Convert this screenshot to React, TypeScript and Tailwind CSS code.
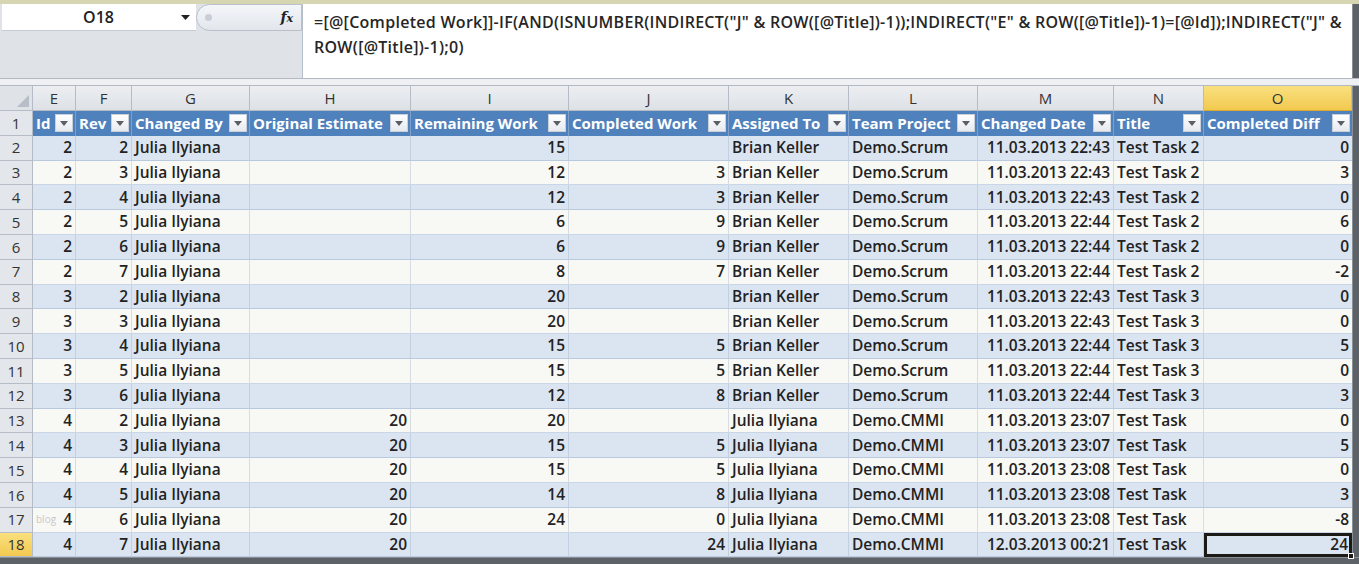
import React from "react";

type Row = {
  n: number;
  id: number;
  rev: number;
  est: string;
  rem: string;
  comp: string;
  who: string;
  proj: string;
  date: string;
  title: string;
  diff: string;
};

const rows: Row[] = [
  { n: 2, id: 2, rev: 2, est: "", rem: "15", comp: "", who: "Brian Keller", proj: "Demo.Scrum", date: "11.03.2013 22:43", title: "Test Task 2", diff: "0" },
  { n: 3, id: 2, rev: 3, est: "", rem: "12", comp: "3", who: "Brian Keller", proj: "Demo.Scrum", date: "11.03.2013 22:43", title: "Test Task 2", diff: "3" },
  { n: 4, id: 2, rev: 4, est: "", rem: "12", comp: "3", who: "Brian Keller", proj: "Demo.Scrum", date: "11.03.2013 22:43", title: "Test Task 2", diff: "0" },
  { n: 5, id: 2, rev: 5, est: "", rem: "6", comp: "9", who: "Brian Keller", proj: "Demo.Scrum", date: "11.03.2013 22:44", title: "Test Task 2", diff: "6" },
  { n: 6, id: 2, rev: 6, est: "", rem: "6", comp: "9", who: "Brian Keller", proj: "Demo.Scrum", date: "11.03.2013 22:44", title: "Test Task 2", diff: "0" },
  { n: 7, id: 2, rev: 7, est: "", rem: "8", comp: "7", who: "Brian Keller", proj: "Demo.Scrum", date: "11.03.2013 22:44", title: "Test Task 2", diff: "-2" },
  { n: 8, id: 3, rev: 2, est: "", rem: "20", comp: "", who: "Brian Keller", proj: "Demo.Scrum", date: "11.03.2013 22:43", title: "Test Task 3", diff: "0" },
  { n: 9, id: 3, rev: 3, est: "", rem: "20", comp: "", who: "Brian Keller", proj: "Demo.Scrum", date: "11.03.2013 22:43", title: "Test Task 3", diff: "0" },
  { n: 10, id: 3, rev: 4, est: "", rem: "15", comp: "5", who: "Brian Keller", proj: "Demo.Scrum", date: "11.03.2013 22:44", title: "Test Task 3", diff: "5" },
  { n: 11, id: 3, rev: 5, est: "", rem: "15", comp: "5", who: "Brian Keller", proj: "Demo.Scrum", date: "11.03.2013 22:44", title: "Test Task 3", diff: "0" },
  { n: 12, id: 3, rev: 6, est: "", rem: "12", comp: "8", who: "Brian Keller", proj: "Demo.Scrum", date: "11.03.2013 22:44", title: "Test Task 3", diff: "3" },
  { n: 13, id: 4, rev: 2, est: "20", rem: "20", comp: "", who: "Julia Ilyiana", proj: "Demo.CMMI", date: "11.03.2013 23:07", title: "Test Task", diff: "0" },
  { n: 14, id: 4, rev: 3, est: "20", rem: "15", comp: "5", who: "Julia Ilyiana", proj: "Demo.CMMI", date: "11.03.2013 23:07", title: "Test Task", diff: "5" },
  { n: 15, id: 4, rev: 4, est: "20", rem: "15", comp: "5", who: "Julia Ilyiana", proj: "Demo.CMMI", date: "11.03.2013 23:08", title: "Test Task", diff: "0" },
  { n: 16, id: 4, rev: 5, est: "20", rem: "14", comp: "8", who: "Julia Ilyiana", proj: "Demo.CMMI", date: "11.03.2013 23:08", title: "Test Task", diff: "3" },
  { n: 17, id: 4, rev: 6, est: "20", rem: "24", comp: "0", who: "Julia Ilyiana", proj: "Demo.CMMI", date: "11.03.2013 23:08", title: "Test Task", diff: "-8" },
  { n: 18, id: 4, rev: 7, est: "20", rem: "", comp: "24", who: "Julia Ilyiana", proj: "Demo.CMMI", date: "12.03.2013 00:21", title: "Test Task", diff: "24" },
];

const letters = ["E", "F", "G", "H", "I", "J", "K", "L", "M", "N", "O"];
const headers = ["Id", "Rev", "Changed By", "Original Estimate", "Remaining Work", "Completed Work", "Assigned To", "Team Project", "Changed Date", "Title", "Completed Diff"];

const cols = "grid grid-cols-[33px_43px_56px_118px_161px_158px_160px_120px_129px_136px_90px_148px]";

function FilterButton() {
  return (
    <span className="ml-auto flex h-[18px] w-[18px] shrink-0 items-center justify-center border border-[#c9d0da] bg-gradient-to-b from-[#ffffff] to-[#e6e9ee]">
      <svg width="8" height="5" viewBox="0 0 8 5">
        <path d="M0 0 H8 L4 5 Z" fill="#5a5f66" />
      </svg>
    </span>
  );
}

function Cell({ children, right, last, band }: { children?: React.ReactNode; right?: boolean; last?: boolean; band: boolean }) {
  return (
    <div
      className={`flex h-full items-center overflow-hidden whitespace-nowrap px-[3px] border-b ${
        band ? "border-[#b8c9e0]" : "border-[#c9d6e8]"
      } ${last ? "" : band ? "border-r border-r-[#c3d0e2]" : "border-r border-r-[#d8dde4]"} ${right ? "justify-end" : "justify-start"}`}
    >
      {children}
    </div>
  );
}

export default function App() {
  return (
    <div className="relative h-[564px] w-[1359px] overflow-hidden bg-[#dfe3e8] font-['Open_Sans',sans-serif] text-[#1a1a1a]">
      {/* window top edge */}
      <div className="h-[4px] bg-[#d7d6b2]" />

      {/* name box + formula bar */}
      <div className="flex h-[74px]">
        <div className="flex w-[302px] flex-col">
          <div className="flex h-[27px] items-center pl-[2px]">
            <div className="flex h-full w-[194px] items-center border-b border-[#c5cbd3] bg-white pr-[4px]">
              <span className="flex-1 pl-[14px] text-center text-[16px] font-semibold text-[#222]">O18</span>
              <svg width="9" height="5" viewBox="0 0 9 5" className="mr-[2px]">
                <path d="M0 0 H9 L4.5 5 Z" fill="#222" />
              </svg>
            </div>
            <div className="flex h-full flex-1 items-center rounded-l-[14px] border border-[#b9c0ca] bg-gradient-to-b from-[#f4f6f9] to-[#e2e6ec] pl-[8px] pr-[8px]">
              <span className="h-[7px] w-[7px] rounded-full bg-[#c9ced6]" />
              <span className="ml-auto font-['DejaVu_Serif',serif] text-[14px] font-bold italic text-[#222]">
                f<span className="text-[11px]">x</span>
              </span>
            </div>
          </div>
          <div className="flex-1 bg-[#dfe3e8]" />
        </div>
        <div className="flex-1 border-l border-[#b6bec9] bg-white pl-[11px] pr-[6px] pt-[6px] text-[16px] font-semibold leading-[25px] tracking-[0.28px] text-[#262626]">
          =[@[Completed Work]]-IF(AND(ISNUMBER(INDIRECT("J" &amp; ROW([@Title])-1));INDIRECT("E" &amp; ROW([@Title])-1)=[@Id]);INDIRECT("J" &amp; ROW([@Title])-1);0)
        </div>
        <div className="w-[7px] border-l border-[#8a8f96] bg-[#5d6168]" />
      </div>

      {/* separator */}
      <div className="h-[8px] border-y border-[#b3bac4] bg-[#eef0f3]" />

      <div className="flex">
        <div className="w-[1352px]">
          {/* column letters */}
          <div className={`${cols} h-[25px] text-[15px] text-[#333]`}>
            <div className="relative border-r border-b border-[#b5bcc6] bg-[#dfe3e8]">
              <svg width="12" height="12" viewBox="0 0 12 12" className="absolute bottom-[3px] right-[3px]">
                <path d="M12 0 V12 H0 Z" fill="#b8bec7" />
              </svg>
            </div>
            {letters.map((l) => (
              <div
                key={l}
                className={`flex items-center justify-center border-r border-b border-[#b5bcc6] ${
                  l === "O" ? "bg-gradient-to-b from-[#f9e07e] to-[#f2c94f] border-b-[#d9a92f]" : "bg-gradient-to-b from-[#eceef1] to-[#dde1e6]"
                }`}
              >
                {l}
              </div>
            ))}
          </div>

          {/* table header row */}
          <div className={`${cols} h-[24.8px] text-[15px]`}>
            <div className="flex items-center justify-center border-r border-b border-[#b5bcc6] bg-[#e3e6ea] text-[#333]">1</div>
            {headers.map((h, i) => (
              <div
                key={h}
                className={`flex items-center gap-[2px] overflow-hidden whitespace-nowrap bg-[#4f81bd] pl-[3px] pr-[2px] font-bold text-white ${
                  i < headers.length - 1 ? "border-r border-[#7d9fca]" : ""
                }`}
              >
                <span>{h}</span>
                <FilterButton />
              </div>
            ))}
          </div>

          {/* data rows */}
          {rows.map((r) => {
            const band = r.n % 2 === 0;
            const bg = band ? "bg-[#dbe5f1]" : "bg-[#f8f8f5]";
            const sel = r.n === 18;
            return (
              <div key={r.n} className={`${cols} h-[24.8px] text-[15.5px] font-semibold text-[#222] ${bg}`}>
                <div
                  className={`flex items-center justify-center border-r border-b border-[#b5bcc6] text-[15px] font-normal text-[#333] ${
                    sel ? "bg-gradient-to-b from-[#f9e07e] to-[#f2c94f]" : "bg-[#e3e6ea]"
                  }`}
                >
                  {r.n}
                </div>
                <Cell right band={band}>
                  {r.n === 17 && <span className="mr-auto text-[10px] font-normal text-[#c8c8c8]">blog</span>}
                  {r.id}
                </Cell>
                <Cell right band={band}>{r.rev}</Cell>
                <Cell band={band}>Julia Ilyiana</Cell>
                <Cell right band={band}>{r.est}</Cell>
                <Cell right band={band}>{r.rem}</Cell>
                <Cell right band={band}>{r.comp}</Cell>
                <Cell band={band}>{r.who}</Cell>
                <Cell band={band}>{r.proj}</Cell>
                <Cell right band={band}>{r.date}</Cell>
                <Cell band={band}>{r.title}</Cell>
                {sel ? (
                  <div className="relative flex h-full items-center justify-end px-[4px]">
                    {r.diff}
                    <div className="absolute inset-0 border-[3px] border-[#1b1a17]" />
                    <div className="absolute bottom-[-2px] right-[-2px] h-[6px] w-[6px] border border-white bg-[#1b1a17]" />
                  </div>
                ) : (
                  <Cell right last band={band}>{r.diff}</Cell>
                )}
              </div>
            );
          })}
        </div>
        <div className="w-[7px] border-l border-[#8a8f96] bg-[#5d6168]" />
      </div>
      <div className="h-[7px] border-t border-[#8a8f96] bg-[#5d6168]" />
    </div>
  );
}
